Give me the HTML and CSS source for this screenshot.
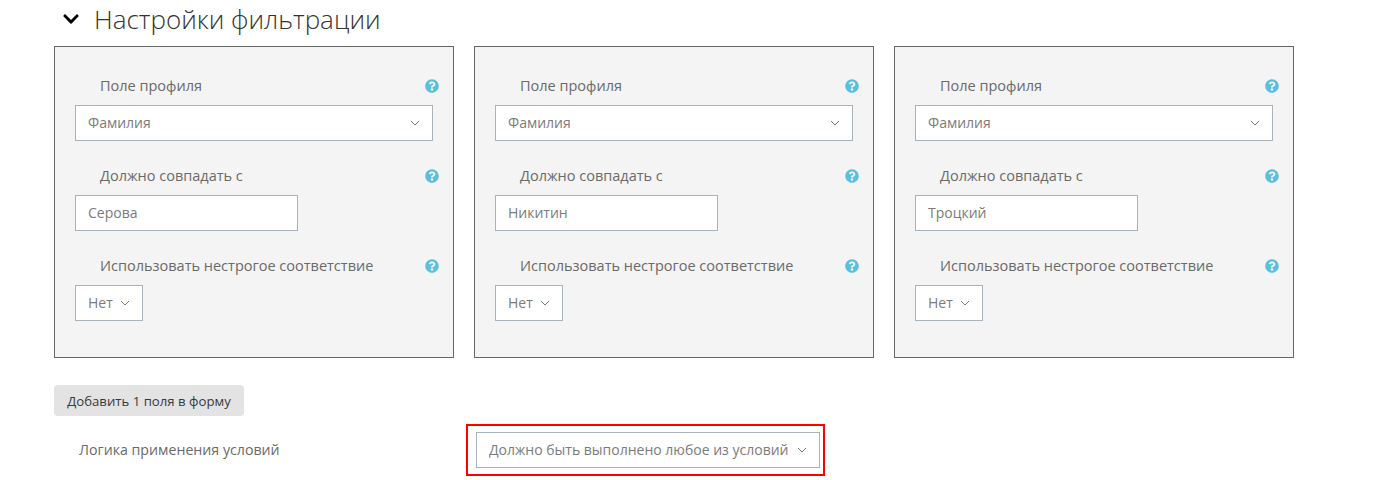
FILE: index.html
```html
<!DOCTYPE html>
<html lang="ru">
<head>
  <meta charset="UTF-8" />
  <meta name="viewport" content="width=device-width, initial-scale=1.0"/>
  <title>Настройки фильтрации</title>
  <link rel="stylesheet" href="styles.css">
</head>
<body>

  <svg class="icon-defs" width="0" height="0">
    <symbol id="help" viewBox="0 0 512 512">
      <path d="M504 256c0 136.997-111.043 248-248 248S8 392.997 8 256C8 119.083 119.043 8 256 8s248 111.083 248 248zM262.655 90c-54.497 0-89.255 22.957-116.549 63.758-3.536 5.286-2.353 12.415 2.715 16.258l34.699 26.31c5.205 3.947 12.621 3.008 16.665-2.122 17.864-22.658 30.113-35.797 57.303-35.797 20.429 0 45.698 13.148 45.698 32.958 0 14.976-12.363 22.667-32.534 33.976C247.128 238.528 216 254.941 216 296v4c0 6.627 5.373 12 12 12h56c6.627 0 12-5.373 12-12v-1.333c0-28.462 83.186-29.647 83.186-106.667 0-58.002-60.165-102-116.531-102zM256 338c-25.365 0-46 20.635-46 46 0 25.364 20.635 46 46 46s46-20.636 46-46c0-25.365-20.635-46-46-46z"/>
    </symbol>
  </svg>

  <div class="page">

    <h3 class="section-title">
      <svg class="collapse-icon" viewBox="0 0 448 512"><path d="M207.029 381.476L12.686 187.132c-9.373-9.373-9.373-24.569 0-33.941l22.667-22.667c9.357-9.357 24.522-9.375 33.901-.04L224 284.505l154.745-154.021c9.379-9.335 24.544-9.317 33.901.04l22.667 22.667c9.373 9.373 9.373 24.569 0 33.941L240.971 381.476c-9.373 9.372-24.569 9.372-33.942 0z"/></svg>
      Настройки фильтрации
    </h3>

    <div class="filters">

      <div class="filter-box">
        <div class="field-label"><span>Поле профиля</span><svg class="help"><use href="#help"/></svg></div>
        <select class="control select-wide"><option>Фамилия</option></select>
        <div class="field-label"><span>Должно совпадать с</span><svg class="help"><use href="#help"/></svg></div>
        <input class="control text-input" type="text" value="Серова">
        <div class="field-label"><span>Использовать нестрогое соответствие</span><svg class="help"><use href="#help"/></svg></div>
        <select class="control select-small"><option>Нет</option></select>
      </div>

      <div class="filter-box">
        <div class="field-label"><span>Поле профиля</span><svg class="help"><use href="#help"/></svg></div>
        <select class="control select-wide"><option>Фамилия</option></select>
        <div class="field-label"><span>Должно совпадать с</span><svg class="help"><use href="#help"/></svg></div>
        <input class="control text-input" type="text" value="Никитин">
        <div class="field-label"><span>Использовать нестрогое соответствие</span><svg class="help"><use href="#help"/></svg></div>
        <select class="control select-small"><option>Нет</option></select>
      </div>

      <div class="filter-box">
        <div class="field-label"><span>Поле профиля</span><svg class="help"><use href="#help"/></svg></div>
        <select class="control select-wide"><option>Фамилия</option></select>
        <div class="field-label"><span>Должно совпадать с</span><svg class="help"><use href="#help"/></svg></div>
        <input class="control text-input" type="text" value="Троцкий">
        <div class="field-label"><span>Использовать нестрогое соответствие</span><svg class="help"><use href="#help"/></svg></div>
        <select class="control select-small"><option>Нет</option></select>
      </div>

    </div>

    <button class="add-btn" type="button">Добавить 1 поля в форму</button>

    <div class="logic-row">
      <div class="logic-label">Логика применения условий</div>
      <div class="highlight">
        <select class="control select-logic"><option>Должно быть выполнено любое из условий</option></select>
      </div>
    </div>

  </div>

</body>
</html>
```

FILE: styles.css
```css
body {
  font-family: "Open Sans", "Noto Sans", sans-serif;
  background: #fff;
  color: #555;
  margin: 0;
  padding: 0;
}

.icon-defs {
  display: block;
  height: 0;
}

.page {
  padding-left: 54px;
}

.section-title {
  display: flex;
  align-items: center;
  height: 46px;
  margin: 0;
  padding: 0 0 8px 9px;
  box-sizing: border-box;
  font-size: 26px;
  font-weight: 300;
  color: #333;
}

.collapse-icon {
  width: 16px;
  height: 18px;
  margin-right: 15px;
  fill: #000;
}

.filters {
  display: flex;
  gap: 20px;
}

.filter-box {
  width: 400px;
  height: 312px;
  box-sizing: border-box;
  padding: 20px;
  background: #f4f4f4;
  border: 1px solid #666;
}

.field-label {
  display: flex;
  justify-content: space-between;
  align-items: center;
  height: 38px;
  padding: 0 0 0 25px;
  margin-right: -6px;
  font-size: 14.5px;
  color: #6a6a6a;
}

.field-label span {
  padding-bottom: 2px;
}

.help {
  width: 14px;
  height: 14px;
  fill: #5bc0de;
}

.control {
  display: block;
  height: 36px;
  box-sizing: border-box;
  margin-bottom: 16px;
  padding: 0 12px 2px;
  border: 1px solid #a9b3bd;
  border-radius: 0;
  background-color: #fff;
  font-family: inherit;
  font-size: 14px;
  color: #7b7b7b;
  outline: none;
}

select.control {
  appearance: none;
  background-image: url("data:image/svg+xml,%3Csvg xmlns='http://www.w3.org/2000/svg' width='10' height='6'%3E%3Cpath d='M1 1l4 4 4-4' fill='none' stroke='%23777' stroke-width='1'/%3E%3C/svg%3E");
  background-repeat: no-repeat;
  background-position: right 12px center;
}

.select-wide {
  width: 358px;
}

.text-input {
  width: 223px;
}

.select-small {
  width: 68px;
}

.select-logic {
  width: 344px;
  margin-bottom: 0;
}

.add-btn {
  display: block;
  width: 190px;
  height: 31px;
  margin-top: 27px;
  padding: 0;
  border: none;
  border-radius: 4px;
  background: #e3e3e3;
  font-family: inherit;
  font-size: 13.2px;
  color: #373a3c;
  cursor: pointer;
}

.logic-row {
  display: flex;
  align-items: center;
  margin-top: 8px;
}

.logic-label {
  width: 412px;
  padding: 0 0 2px 25px;
  box-sizing: border-box;
  font-size: 14.2px;
  color: #6a6a6a;
}

.highlight {
  padding: 6px 3px 6px 8px;
  border: 2px solid #f00;
}
```
